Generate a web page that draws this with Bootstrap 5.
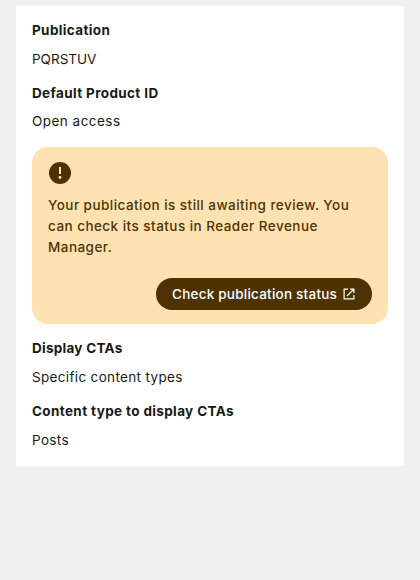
<!DOCTYPE html>
<html lang="en">
<head>
<meta charset="utf-8">
<meta name="viewport" content="width=device-width, initial-scale=1">
<title>Publication settings</title>
<link href="https://cdn.jsdelivr.net/npm/bootstrap@5.3.0/dist/css/bootstrap.min.css" rel="stylesheet">
<style>
body{background:#f0f0f0;color:#161b18;font-family:"Google Sans",Inter,"Liberation Sans",sans-serif;font-size:13.5px;line-height:20px}
.panel{margin-top:6px;height:460px;padding-top:14px;box-shadow:0 1px 0 #ebeef0}
.setting{height:63px;white-space:nowrap}
.setting h2{font-size:13.5px;line-height:20px;font-weight:700;margin:0 0 9px;letter-spacing:.37px}
.setting p{font-weight:380;line-height:20px;margin:0;letter-spacing:.34px}
.setting .caps{letter-spacing:0}
.setting .tight{letter-spacing:.27px}
.setting .roomy{letter-spacing:.47px;margin-top:-1px}
.notice{height:177px;margin-top:1px;margin-bottom:14px;border-radius:16px;background:#ffe2b1;color:#4e3300;padding:14px 16px}
.notice-text{font-weight:480;line-height:21px;margin-top:10px;white-space:nowrap;letter-spacing:.46px}
.cta{height:32px;background:#4e3300;color:#fff;font-weight:480;font-size:13.5px;width:216px;margin-top:20px;white-space:nowrap;letter-spacing:.23px}
.cta:hover{background:#624100;color:#fff}
</style>
</head>
<body>
<main class="panel bg-white mx-3 px-3">
  <section class="setting"><h2>Publication</h2><p class="caps">PQRSTUV</p></section>
  <section class="setting"><h2>Default Product ID</h2><p class="roomy">Open access</p></section>
  <section class="notice d-flex flex-column">
    <svg class="flex-shrink-0" width="24" height="24" viewBox="0 0 24 24" aria-hidden="true"><circle cx="12" cy="12" r="11" fill="#4e3300"/><path d="M12 6v7" stroke="#ffe2b1" stroke-width="2"/><circle cx="12" cy="16.5" r="1.4" fill="#ffe2b1"/></svg>
    <div class="notice-text">Your publication is still awaiting review. You<br>can check its status in Reader Revenue<br>Manager.</div>
    <a class="cta btn rounded-pill border-0 py-0 px-3 d-flex flex-shrink-0 align-items-center justify-content-between align-self-end" href="#"><span>Check publication status</span>
      <svg width="14" height="14" viewBox="0 0 14 14" fill="none" stroke="currentColor" stroke-width="1.2" aria-hidden="true"><path d="M6 2.1H2.1v9.8h9.8V8M8 2.1h3.9V6M11.6 2.4 5 9"/></svg></a>
  </section>
  <section class="setting"><h2 class="tight">Display CTAs</h2><p>Specific content types</p></section>
  <section class="setting"><h2>Content type to display CTAs</h2><p>Posts</p></section>
</main>
<script src="https://cdn.jsdelivr.net/npm/bootstrap@5.3.0/dist/js/bootstrap.bundle.min.js"></script>
</body>
</html>
